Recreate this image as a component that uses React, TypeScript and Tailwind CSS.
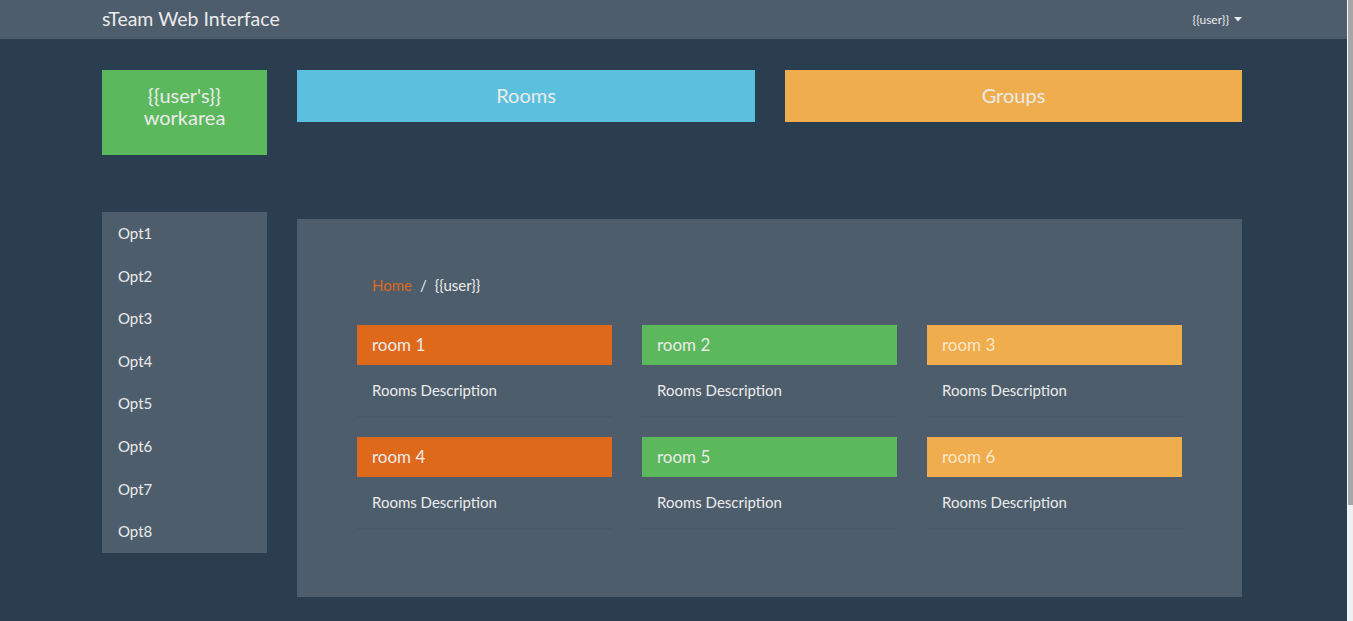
import React from 'react'

const options = ['Opt1', 'Opt2', 'Opt3', 'Opt4', 'Opt5', 'Opt6', 'Opt7', 'Opt8']

const rooms = [
  { name: 'room 1', head: 'bg-[#df691a] text-[#ebebeb]' },
  { name: 'room 2', head: 'bg-[#5cb85c] text-[#ebebeb]' },
  { name: 'room 3', head: 'bg-[#f0ad4e] text-[#fbe6c8]' },
  { name: 'room 4', head: 'bg-[#df691a] text-[#ebebeb]' },
  { name: 'room 5', head: 'bg-[#5cb85c] text-[#ebebeb]' },
  { name: 'room 6', head: 'bg-[#f0ad4e] text-[#fbe6c8]' },
]

function RoomCard({ name, head }: { name: string; head: string }) {
  return (
    <div className="bg-[#4e5d6c] shadow-[0_1px_1px_rgba(0,0,0,0.04)]">
      <div className={`h-10 flex items-center px-[15px] text-[17px] ${head}`}>{name}</div>
      <div className="h-[51px] flex items-center px-[15px] text-[15px] text-[#ebebeb]">
        Rooms Description
      </div>
    </div>
  )
}

export default function App() {
  return (
    <div className="flex h-screen overflow-hidden bg-[#2b3e50] text-[#ebebeb] font-['Lato','Noto_Sans',sans-serif]">
      <div className="flex-1 min-w-0">
        <nav className="h-[39px] bg-[#4e5d6c]">
          <div className="ml-[102px] w-[1140px] h-full flex items-center justify-between">
            <span className="text-[19.5px] text-[#ebebeb] pb-[2px]">sTeam Web Interface</span>
            <span className="flex items-center gap-[5px] text-[12px]">
              {'{{user}}'}
              <svg width="8" height="5" viewBox="0 0 8 5">
                <path d="M0 0h8L4 4.5z" fill="#ebebeb" />
              </svg>
            </span>
          </div>
        </nav>

        <div className="ml-[102px] w-[1140px] pt-[31px]">
          <div className="flex gap-[30px] items-start">
            <div className="w-[165px] h-[85px] bg-[#5cb85c] flex flex-col items-center justify-center text-[20px] leading-[22px] pb-[14px]">
              <span>{"{{user's}}"}</span>
              <span>workarea</span>
            </div>
            <div className="w-[458px] h-[52px] bg-[#5bc0de] flex items-center justify-center text-[20px] pb-[2px]">
              Rooms
            </div>
            <div className="w-[457px] h-[52px] bg-[#f0ad4e] flex items-center justify-center text-[20px] pb-[2px]">
              Groups
            </div>
          </div>

          <div className="flex gap-[30px] items-start mt-[57px]">
            <ul className="w-[165px] bg-[#4e5d6c]">
              {options.map((o) => (
                <li key={o} className="h-[42.6px] flex items-center px-4 text-[15px]">
                  {o}
                </li>
              ))}
            </ul>

            <div className="w-[945px] h-[378px] mt-[7px] bg-[#4e5d6c] px-[60px] pt-[55px]">
              <div className="px-[15px] h-[22px] flex items-center gap-[8px] text-[15px]">
                <span className="text-[#df691a]">Home</span>
                <span>/</span>
                <span>{'{{user}}'}</span>
              </div>
              <div className="grid grid-cols-3 gap-x-[30px] gap-y-[21px] mt-[29px]">
                {rooms.map((r) => (
                  <RoomCard key={r.name} {...r} />
                ))}
              </div>
            </div>
          </div>
        </div>
      </div>

      <div className="w-[6px] flex flex-col border-l border-[#f6f6f6]">
        <div className="h-[505px] bg-[#a6a6a6]" />
        <div className="flex-1 bg-[#efefef]" />
      </div>
    </div>
  )
}
